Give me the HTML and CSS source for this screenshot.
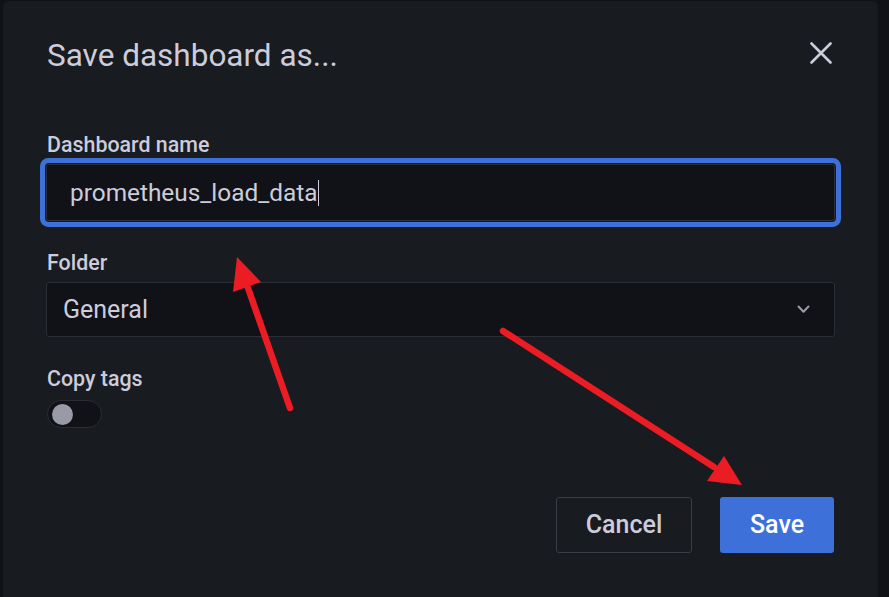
FILE: index.html
```html
<!DOCTYPE html>
<html>
<head>
<meta charset="utf-8">
<link rel="stylesheet" href="styles.css">
</head>
<body>
<div class="modal">
  <div class="header">
    <h2 class="title">Save dashboard as...</h2>
    <svg class="close" width="22" height="22" viewBox="0 0 22 22"><path d="M1.5 1.5 L20.5 20.5 M20.5 1.5 L1.5 20.5" stroke="#ccccdc" stroke-width="2.6" stroke-linecap="round" fill="none"/></svg>
  </div>
  <div class="form">
    <div class="field">
      <label class="label">Dashboard name</label>
      <div class="input focused"><span class="value">prometheus_load_data</span><span class="caret"></span></div>
    </div>
    <div class="field">
      <label class="label">Folder</label>
      <div class="input select"><span class="value sel">General</span>
        <svg class="chevron" width="13" height="9" viewBox="0 0 13 9"><path d="M1.5 1.5 L6.5 6.8 L11.5 1.5" stroke="#9a9ba5" stroke-width="2" fill="none" stroke-linecap="round" stroke-linejoin="round"/></svg>
      </div>
    </div>
    <div class="field">
      <label class="label">Copy tags</label>
      <div class="toggle"><span class="knob"></span></div>
    </div>
  </div>
  <div class="actions">
    <button class="btn secondary">Cancel</button>
    <button class="btn primary">Save</button>
  </div>
</div>
<svg class="annot" width="889" height="597" viewBox="0 0 889 597">
  <line x1="290" y1="408" x2="248" y2="288" stroke="#ec1c24" stroke-width="6.5" stroke-linecap="round"/>
  <polygon points="237,257 233,292 261,282" fill="#ec1c24"/>
  <line x1="503" y1="331" x2="714" y2="467" stroke="#ec1c24" stroke-width="6.5" stroke-linecap="round"/>
  <polygon points="742,485 707,481 724,456" fill="#ec1c24"/>
</svg>
</body>
</html>
```
FILE: styles.css
```css
html, body {
  margin: 0;
  padding: 0;
  background: #111215;
  overflow: hidden;
  width: 889px;
  height: 597px;
}
body {
  font-family: Roboto, "Noto Sans", sans-serif;
  color: #ccccdc;
  position: relative;
}
.modal {
  margin: 1px 0 0 3px;
  width: 875px;
  height: 660px;
  box-sizing: border-box;
  background: #181b1f;
  border-radius: 6px 6px 0 0;
  padding: 0 44px;
  display: flex;
  flex-direction: column;
}
.header {
  height: 108px;
  display: flex;
  align-items: center;
  justify-content: space-between;
}
.title {
  margin: 0;
  font-size: 31.5px;
  font-weight: 400;
  color: #ccccdc;
  line-height: 36px;
  margin-top: 2px;
}
.close {
  margin-right: 2px;
  margin-top: -4px;
}
.form {
  padding-top: 24px;
  display: flex;
  flex-direction: column;
  gap: 30px;
}
.field {
  display: flex;
  flex-direction: column;
  align-items: flex-start;
}
.label {
  font-size: 21.4px;
  font-weight: 500;
  line-height: 24px;
  margin-bottom: 7px;
  color: #ccccdc;
}
.input {
  box-sizing: border-box;
  width: 789px;
  height: 57px;
  margin-left: -1px;
  background: #111217;
  border: 1px solid #2c2e35;
  border-radius: 3px;
  display: flex;
  align-items: center;
  padding-left: 23px;
}
.input.focused {
  box-shadow: 0 0 0 1px #181b1f, 0 0 0 6px #3d71d9;
  border-radius: 3px;
}
.value {
  font-size: 24.4px;
  color: #ccccdc;
}
.caret {
  width: 1px;
  height: 26px;
  background: #ccccdc;
  margin-left: 1px;
}
.select {
  height: 55px;
  padding-left: 16px;
  padding-right: 24px;
  justify-content: space-between;
}
.sel {
  font-size: 25px;
}
.toggle {
  box-sizing: border-box;
  width: 55px;
  height: 28px;
  border-radius: 14px;
  background: #111217;
  border: 1px solid #2a2c33;
  display: flex;
  align-items: center;
  padding-left: 4px;
  margin-top: 2px;
}
.knob {
  width: 21px;
  height: 21px;
  border-radius: 50%;
  background: #9a9aa6;
}
.actions {
  display: flex;
  justify-content: flex-end;
  gap: 28px;
  margin-top: 69px;
}
.btn {
  font-family: Roboto, "Noto Sans", sans-serif;
  font-size: 25px;
  font-weight: 500;
  height: 56px;
  padding-bottom: 2px;
  border-radius: 3px;
  box-sizing: border-box;
  cursor: pointer;
}
.secondary {
  width: 136px;
  background: transparent;
  border: 1px solid #3b3d45;
  color: #ccccdc;
}
.primary {
  width: 114px;
  background: #3d71d9;
  border: none;
  color: #ffffff;
}
.annot {
  position: absolute;
  left: 0;
  top: 0;
  pointer-events: none;
}
```
